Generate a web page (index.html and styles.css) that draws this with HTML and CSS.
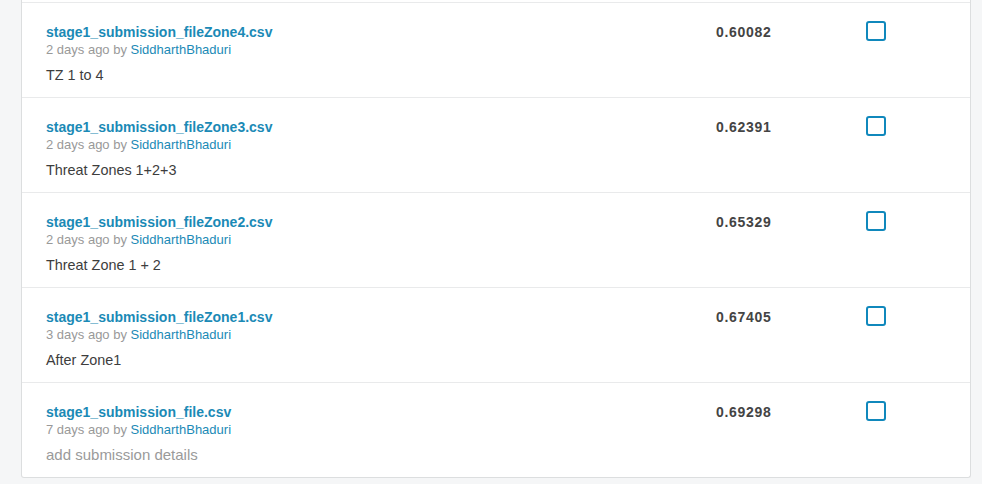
FILE: index.html
```html
<!DOCTYPE html>
<html>
<head>
<meta charset="utf-8">
<link rel="stylesheet" href="styles.css">
</head>
<body>
<div class="page">
  <div class="card">
    <div class="row">
      <div class="info">
        <a class="name">stage1_submission_fileZone4.csv</a>
        <div class="meta">2 days ago by <a class="user">SiddharthBhaduri</a></div>
        <div class="desc">TZ 1 to 4</div>
      </div>
      <div class="score">0.60082</div>
      <div class="check"><span class="box"></span></div>
    </div>
    <div class="row">
      <div class="info">
        <a class="name">stage1_submission_fileZone3.csv</a>
        <div class="meta">2 days ago by <a class="user">SiddharthBhaduri</a></div>
        <div class="desc">Threat Zones 1+2+3</div>
      </div>
      <div class="score">0.62391</div>
      <div class="check"><span class="box"></span></div>
    </div>
    <div class="row">
      <div class="info">
        <a class="name">stage1_submission_fileZone2.csv</a>
        <div class="meta">2 days ago by <a class="user">SiddharthBhaduri</a></div>
        <div class="desc">Threat Zone 1 + 2</div>
      </div>
      <div class="score">0.65329</div>
      <div class="check"><span class="box"></span></div>
    </div>
    <div class="row">
      <div class="info">
        <a class="name">stage1_submission_fileZone1.csv</a>
        <div class="meta">3 days ago by <a class="user">SiddharthBhaduri</a></div>
        <div class="desc">After Zone1</div>
      </div>
      <div class="score">0.67405</div>
      <div class="check"><span class="box"></span></div>
    </div>
    <div class="row">
      <div class="info">
        <a class="name">stage1_submission_file.csv</a>
        <div class="meta">7 days ago by <a class="user">SiddharthBhaduri</a></div>
        <div class="desc empty">add submission details</div>
      </div>
      <div class="score">0.69298</div>
      <div class="check"><span class="box"></span></div>
    </div>
  </div>
</div>
</body>
</html>
```

FILE: styles.css
```css
html, body {
  margin: 0;
  padding: 0;
  background: #f5f6f7;
  font-family: "Liberation Sans", Arial, sans-serif;
}

.page {
  padding: 0 11px 6px 21px;
}

.card {
  background: #fff;
  border: 1px solid #dcdedf;
  border-top: 0;
  border-radius: 0 0 3px 3px;
  padding-top: 2px;
}

.row {
  display: grid;
  grid-template-columns: 670px 150px auto;
  height: 94px;
  box-sizing: content-box;
  border-top: 1px solid #e9eaeb;
  padding-left: 24px;
}

.info {
  padding-top: 20px;
}

.name {
  display: block;
  font-size: 14px;
  font-weight: bold;
  line-height: 18px;
  color: #1b8ab6;
}

.meta {
  font-size: 13px;
  line-height: 18px;
  color: #999;
}

.user {
  color: #1b8ab6;
}

.desc {
  margin-top: 6px;
  font-size: 14.4px;
  line-height: 20px;
  color: #3d3d3d;
}

.desc.empty {
  font-size: 15px;
  color: #9a9a9a;
}

.score {
  padding-top: 20px;
  font-size: 14px;
  font-weight: bold;
  line-height: 18px;
  letter-spacing: 0.7px;
  color: #444;
}

.check {
  padding-top: 18px;
}

.box {
  display: block;
  width: 16px;
  height: 16px;
  border: 2px solid #1088bc;
  border-radius: 3px;
}
```
